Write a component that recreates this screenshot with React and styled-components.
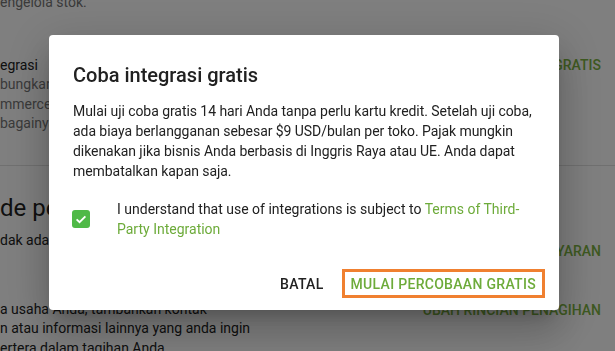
import React from 'react';
import styled, { createGlobalStyle } from 'styled-components';

const GlobalStyle = createGlobalStyle`
  html, body {
    margin: 0;
    padding: 0;
    background: #ffffff;
    font-family: Roboto, 'Liberation Sans', sans-serif;
    overflow: hidden;
  }
`;

const Page = styled.div`
  width: 615px;
  height: 351px;
  box-sizing: border-box;
  padding: 0 14px 0 0;
  overflow: hidden;
  color: #212121;
`;

const Row = styled.div`
  display: flex;
  justify-content: space-between;
  align-items: flex-start;
  margin-top: ${p => p.$top || 0}px;
`;

const Info = styled.div`
  display: flex;
  flex-direction: column;
`;

const Line = styled.div`
  font-size: 14px;
  line-height: ${p => p.$lh || 20}px;
  white-space: nowrap;
  color: ${p => (p.$muted ? '#757575' : '#212121')};
`;

const Action = styled.div`
  font-size: 14px;
  line-height: 20px;
  font-weight: 500;
  text-transform: uppercase;
  color: #7cb342;
  white-space: nowrap;
  margin-top: ${p => p.$top || 0}px;
`;

const Divider = styled.div`
  height: 1px;
  margin: 31px -14px 0 0;
  background: #e0e0e0;
`;

const Heading = styled.div`
  margin-top: 26px;
  font-size: 24px;
  line-height: 32px;
  color: #212121;
  white-space: nowrap;
`;

const Overlay = styled.div`
  position: fixed;
  inset: 0;
  background: rgba(0, 0, 0, 0.5);
  display: flex;
  justify-content: center;
  align-items: flex-start;
  padding: 35px 7px 0 0;
`;

const Dialog = styled.div`
  width: 510px;
  box-sizing: border-box;
  background: #ffffff;
  border-radius: 4px;
  box-shadow: 0 11px 15px -7px rgba(0, 0, 0, 0.2),
    0 24px 38px 3px rgba(0, 0, 0, 0.14), 0 9px 46px 8px rgba(0, 0, 0, 0.12);
  padding: 24px 0 12px;
  color: #212121;
`;

const Title = styled.h2`
  margin: 0 24px;
  font-size: 20px;
  line-height: 32px;
  font-weight: 500;
`;

const Body = styled.p`
  margin: 10px 18px 0 24px;
  font-size: 14px;
  line-height: 20px;
  letter-spacing: -0.06px;
`;

const Agree = styled.label`
  display: flex;
  align-items: center;
  gap: 27px;
  margin: 18px 24px 0 23px;
  font-size: 14px;
  line-height: 20px;
`;

const Box = styled.span`
  flex: none;
  width: 18px;
  height: 18px;
  border-radius: 3px;
  background: #4fb947;
  display: flex;
  align-items: center;
  justify-content: center;
`;

const Link = styled.a`
  color: #6dab3a;
  text-decoration: none;
`;

const Actions = styled.div`
  display: flex;
  justify-content: flex-end;
  align-items: center;
  gap: 10px;
  margin-top: 30px;
  padding: 0 14px 0 0;
`;

const Button = styled.button`
  height: 29px;
  box-sizing: border-box;
  padding: 0 ${p => (p.$focus ? 6 : 8)}px;
  border: ${p => (p.$focus ? '3px solid #f08030' : 'none')};
  background: transparent;
  font-family: Roboto, 'Liberation Sans', sans-serif;
  font-size: 14px;
  font-weight: 500;
  letter-spacing: 0.3px;
  text-transform: uppercase;
  color: ${p => (p.$primary ? '#6dab3a' : '#212121')};
  cursor: pointer;
`;

const Check = () => (
  <svg width="14" height="14" viewBox="0 0 24 24">
    <path d="M4.5 12.5l5 5 10-10" fill="none" stroke="#fff" strokeWidth="3.2" />
  </svg>
);

export default function App() {
  return (
    <>
      <GlobalStyle />
      <Page>
        <Line $muted style={{ marginTop: -8 }}>engelola stok.</Line>
        <Row $top={43}>
          <Info>
            <Line>egrasi</Line>
            <Line $muted $lh={19.5}>bungkan akun Anda dengan platform</Line>
            <Line $muted $lh={19.5}>mmerce lainnya seperti Amazon, eBay dan</Line>
            <Line $muted $lh={19.5}>bagainya</Line>
          </Info>
          <Action>Coba gratis</Action>
        </Row>
        <Divider />
        <Heading>de pembayaran</Heading>
        <Row $top={6}>
          <Info>
            <Line>dak ada metode pembayaran</Line>
          </Info>
          <Action $top={11}>Tambahkan metode pembayaran</Action>
        </Row>
        <Row $top={39}>
          <Info>
            <Line $lh={19.5}>a usaha Anda, tambahkan kontak</Line>
            <Line $lh={19.5}>n atau informasi lainnya yang anda ingin</Line>
            <Line $lh={19.5}>ertera dalam tagihan Anda</Line>
          </Info>
          <Action>Ubah rincian penagihan</Action>
        </Row>
      </Page>
      <Overlay>
        <Dialog>
          <Title>Coba integrasi gratis</Title>
          <Body>
            Mulai uji coba gratis 14 hari Anda tanpa perlu kartu kredit. Setelah uji coba,
            ada biaya berlangganan sebesar $9 USD/bulan per toko. Pajak mungkin
            dikenakan jika bisnis Anda berbasis di Inggris Raya atau UE. Anda dapat
            membatalkan kapan saja.
          </Body>
          <Agree>
            <Box>
              <Check />
            </Box>
            <span>
              I understand that use of integrations is subject to{' '}
              <Link href="#">Terms of Third-Party Integration</Link>
            </span>
          </Agree>
          <Actions>
            <Button>Batal</Button>
            <Button $primary $focus>Mulai percobaan gratis</Button>
          </Actions>
        </Dialog>
      </Overlay>
    </>
  );
}
